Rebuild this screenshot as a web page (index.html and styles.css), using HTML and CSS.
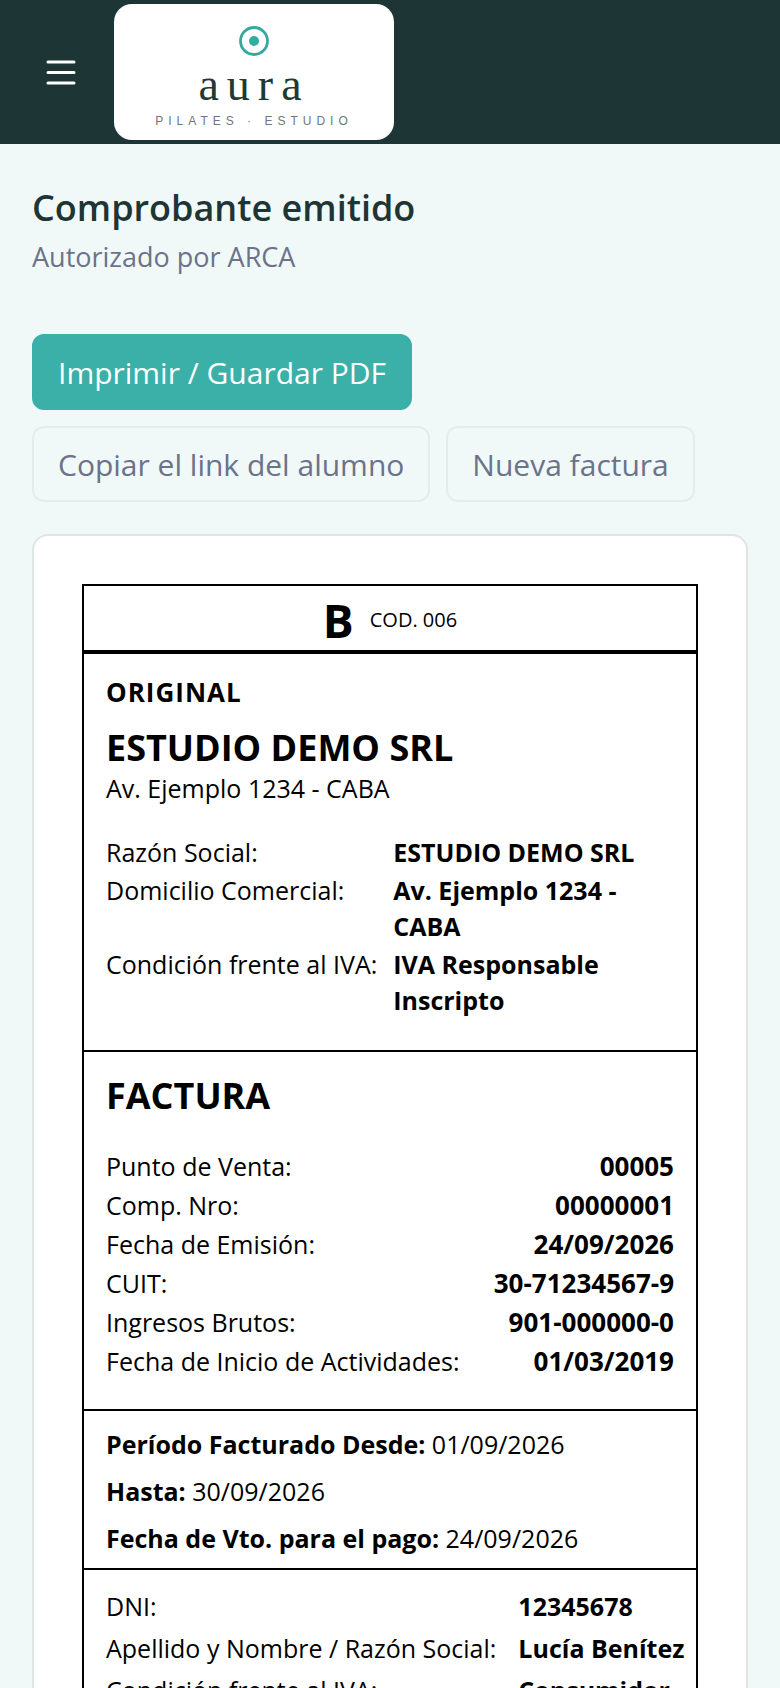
FILE: index.html
```html
<!DOCTYPE html>
<html lang="es">
<head>
    <meta charset="UTF-8" />
    <meta name="viewport" content="width=device-width, initial-scale=1.0" />
    <title>Comprobante emitido</title>
    <link rel="stylesheet" href="styles.css">
</head>
<body>
    <header class="topbar">
        <button class="menu-toggle" type="button" aria-label="Abrir menú">
            <svg width="30" height="26" viewBox="0 0 30 26" fill="none" stroke="#fff" stroke-width="3" stroke-linecap="round">
                <path d="M2 3h26M2 13.5h26M2 24h26" />
            </svg>
        </button>
        <a class="logo" href="#">
            <svg class="logo-mark" width="30" height="30" viewBox="0 0 30 30" fill="none">
                <circle cx="15" cy="15" r="13.5" stroke="#35a99b" stroke-width="2.8" />
                <circle cx="15" cy="15" r="5" fill="#2fae9f" />
            </svg>
            <span class="logo-name">aura</span>
            <span class="logo-tag">PILATES · ESTUDIO</span>
        </a>
    </header>

    <main class="content">
        <h1>Comprobante emitido</h1>
        <p class="subtitle">Autorizado por ARCA</p>

        <div class="actions">
            <button class="btn btn-primary" type="button">Imprimir / Guardar PDF</button>
            <button class="btn" type="button">Copiar el link del alumno</button>
            <button class="btn" type="button">Nueva factura</button>
        </div>

        <div class="card">
            <article class="invoice">
                <div class="invoice-type">
                    <span class="letter">B</span>
                    <span class="code">COD. 006</span>
                </div>

                <section class="issuer">
                    <p class="copy">ORIGINAL</p>
                    <h2>ESTUDIO DEMO SRL</h2>
                    <p>Av. Ejemplo 1234 - CABA</p>
                    <dl class="data issuer-data">
                        <dt>Razón Social:</dt>
                        <dd>ESTUDIO DEMO SRL</dd>
                        <dt>Domicilio Comercial:</dt>
                        <dd>Av. Ejemplo 1234 - CABA</dd>
                        <dt>Condición frente al IVA:</dt>
                        <dd>IVA Responsable Inscripto</dd>
                    </dl>
                </section>

                <section class="voucher">
                    <h2>FACTURA</h2>
                    <dl class="data voucher-data">
                        <dt>Punto de Venta:</dt>
                        <dd>00005</dd>
                        <dt>Comp. Nro:</dt>
                        <dd>00000001</dd>
                        <dt>Fecha de Emisión:</dt>
                        <dd>24/09/2026</dd>
                        <dt>CUIT:</dt>
                        <dd>30-71234567-9</dd>
                        <dt>Ingresos Brutos:</dt>
                        <dd>901-000000-0</dd>
                        <dt>Fecha de Inicio de Actividades:</dt>
                        <dd>01/03/2019</dd>
                    </dl>
                </section>

                <section class="period">
                    <p><strong>Período Facturado Desde:</strong> 01/09/2026</p>
                    <p><strong>Hasta:</strong> 30/09/2026</p>
                    <p><strong>Fecha de Vto. para el pago:</strong> 24/09/2026</p>
                </section>

                <section class="customer">
                    <dl class="data customer-data">
                        <dt>DNI:</dt>
                        <dd>12345678</dd>
                        <dt>Apellido y Nombre / Razón Social:</dt>
                        <dd class="name">Lucía Benítez</dd>
                        <dt>Condición frente al IVA:</dt>
                        <dd>Consumidor Final</dd>
                    </dl>
                </section>
            </article>
        </div>
    </main>
</body>
</html>
```
FILE: styles.css
```css
* {
    box-sizing: border-box;
}

body {
    margin: 0;
    background-color: #f0f9f8;
    color: #1e3535;
    font-family: "Segoe UI", "Open Sans", "Noto Sans", sans-serif;
}

h1, h2, p, dl, dd {
    margin: 0;
}

/* Barra superior */
.topbar {
    display: flex;
    align-items: center;
    gap: 24px;
    height: 144px;
    padding: 0 32px;
    background-color: #1e3535;
}

.menu-toggle {
    display: flex;
    align-items: center;
    justify-content: center;
    width: 58px;
    height: 58px;
    padding: 0;
    border: none;
    background: none;
    cursor: pointer;
}

.logo {
    display: flex;
    flex-direction: column;
    align-items: center;
    width: 280px;
    height: 136px;
    padding-top: 22px;
    border-radius: 18px;
    background-color: #fff;
    text-decoration: none;
}

.logo-name {
    margin-top: 4px;
    font-family: Georgia, "Liberation Serif", serif;
    font-size: 46px;
    line-height: 50px;
    letter-spacing: 8px;
    color: #1e3a32;
}

.logo-tag {
    font-family: "Liberation Sans", Arial, sans-serif;
    font-size: 12px;
    line-height: 22px;
    letter-spacing: 5px;
    color: #6f7777;
}

/* Contenido */
.content {
    padding: 40px 32px;
}

h1 {
    font-size: 36px;
    font-weight: 600;
    line-height: 48px;
}

.subtitle {
    font-size: 27px;
    line-height: 50px;
    color: #6b7289;
}

.actions {
    display: flex;
    flex-wrap: wrap;
    gap: 16px;
    margin: 52px 0 32px;
}

.btn {
    height: 76px;
    padding: 0 24px;
    border: 2px solid #e3edec;
    border-radius: 12px;
    background: none;
    color: #6b7289;
    font-family: inherit;
    font-size: 30px;
    cursor: pointer;
}

.btn-primary {
    border-color: #3ab0a8;
    background-color: #3ab0a8;
    color: #fff;
}

.card {
    padding: 48px;
    border: 2px solid #dde6e5;
    border-radius: 16px;
    background-color: #fff;
}

/* Factura */
.invoice {
    border: 2px solid #000;
    color: #000;
    font-size: 25px;
    line-height: 36px;
}

.invoice-type {
    display: flex;
    align-items: center;
    justify-content: center;
    gap: 16px;
    height: 68px;
    padding-top: 4px;
    border-bottom: 4px solid #000;
}

.letter {
    font-size: 46px;
    font-weight: 700;
    line-height: 60px;
}

.code {
    font-size: 20px;
}

.invoice section {
    padding: 0 22px;
    border-bottom: 2px solid #000;
}

.invoice h2 {
    font-size: 36px;
    font-weight: 700;
    line-height: 44px;
}

.invoice .issuer {
    padding-top: 20px;
    padding-bottom: 32px;
}

.copy {
    margin-bottom: 16px;
    font-size: 26px;
    font-weight: 700;
    letter-spacing: 1px;
}

.data {
    display: grid;
    column-gap: 16px;
    row-gap: 2px;
}

.data dd {
    font-weight: 700;
}

.issuer-data {
    grid-template-columns: auto 1fr;
    margin-top: 28px;
}

.invoice .voucher {
    padding-top: 22px;
    padding-bottom: 30px;
}

.voucher-data {
    grid-template-columns: auto 1fr;
    row-gap: 3px;
    margin-top: 30px;
}

.voucher-data dd {
    font-size: 26px;
    text-align: right;
}

.invoice .period {
    padding-top: 10px;
    padding-bottom: 6px;
    line-height: 47px;
}

.invoice .customer {
    padding: 18px 16px 20px 22px;
}

.customer-data {
    grid-template-columns: max-content 1fr;
    column-gap: 22px;
    row-gap: 6px;
}

.customer-data dd {
    font-size: 25px;
}

.name {
    white-space: nowrap;
}
```
